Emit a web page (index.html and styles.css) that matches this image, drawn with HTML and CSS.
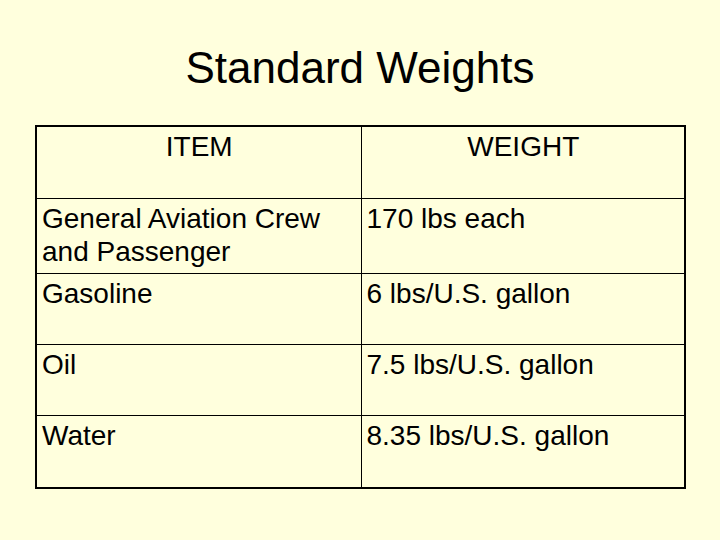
FILE: index.html
```html
<!DOCTYPE html>
<html>
<head>
<meta charset="utf-8">
<link rel="stylesheet" href="styles.css">
</head>
<body>
<div class="slide">
  <h1 class="title">Standard Weights</h1>
  <table class="weights">
    <tr class="r-head">
      <td class="c-item center">ITEM</td>
      <td class="c-weight center">WEIGHT</td>
    </tr>
    <tr class="r1">
      <td>General Aviation Crew and Passenger</td>
      <td>170 lbs each</td>
    </tr>
    <tr class="r2">
      <td>Gasoline</td>
      <td>6 lbs/U.S. gallon</td>
    </tr>
    <tr class="r3">
      <td>Oil</td>
      <td>7.5 lbs/U.S. gallon</td>
    </tr>
    <tr class="r4">
      <td>Water</td>
      <td>8.35 lbs/U.S. gallon</td>
    </tr>
  </table>
</div>
</body>
</html>
```
FILE: styles.css
```css
html, body {
  margin: 0;
  padding: 0;
}
body {
  background: #ffffdd;
  width: 720px;
  height: 540px;
  overflow: hidden;
  font-family: "Liberation Sans", Arial, sans-serif;
  color: #000;
}
.slide {
  display: flex;
  flex-direction: column;
  align-items: flex-start;
  padding-top: 41px;
}
.title {
  align-self: stretch;
  margin: 0;
  font-size: 44px;
  font-weight: normal;
  line-height: 53px;
  text-align: center;
  height: 84px;
}
.weights {
  margin-left: 35px;
  width: 649px;
  border-collapse: collapse;
  border: 2px solid #000;
  table-layout: fixed;
}
.weights td {
  border: 1px solid #000;
  font-size: 28px;
  line-height: 33px;
  vertical-align: top;
  padding: 3px 4px 0 5px;
  box-sizing: border-box;
}
.weights .c-item { width: 325px; }
.weights .c-weight { width: 324px; }
.weights .center { text-align: center; }
.r-head td { height: 72px; }
.r1 td { height: 75px; }
.r2 td { height: 71px; }
.r3 td { height: 71px; }
.r4 td { height: 73px; }
```
